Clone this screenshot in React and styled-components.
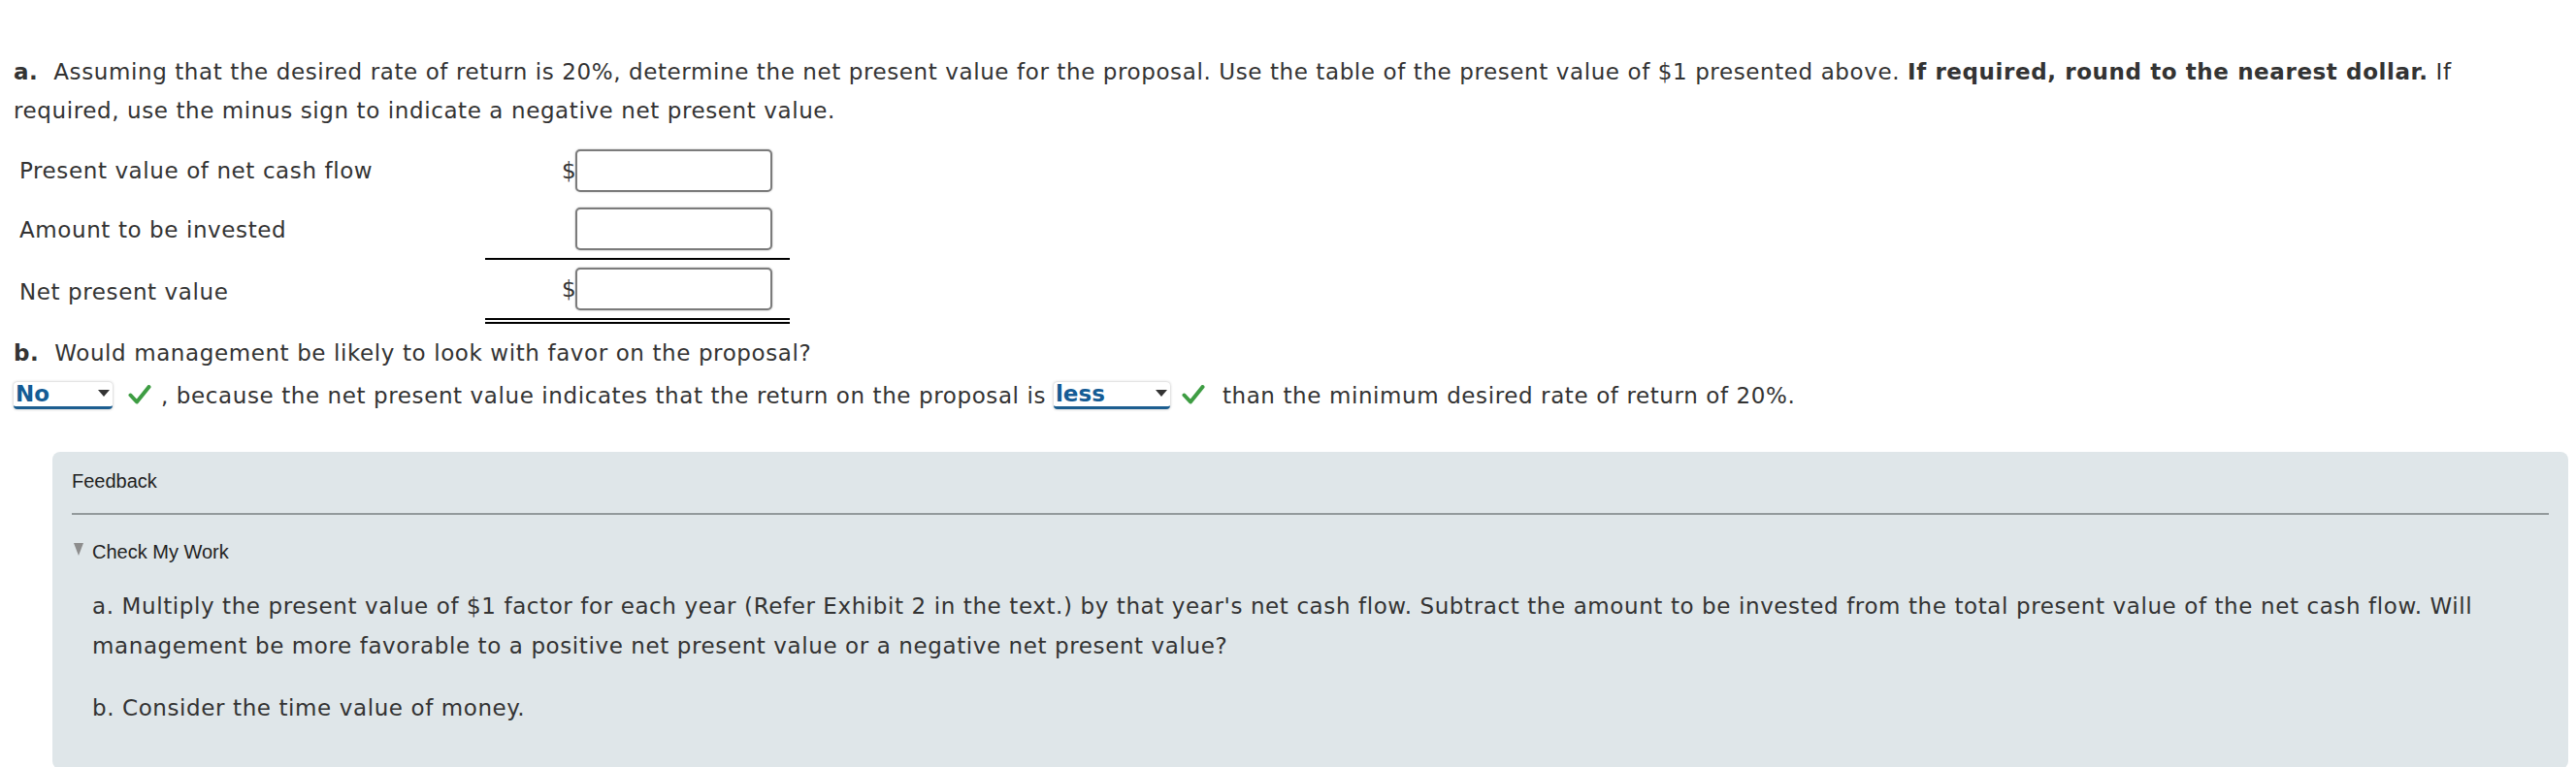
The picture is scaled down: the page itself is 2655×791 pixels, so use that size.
import React from "react"
import styled, { createGlobalStyle } from "styled-components"

const GlobalStyle = createGlobalStyle`
  body{
    margin: 0;
    background: #ffffff;
    color: #333333;
    font-family: "DejaVu Sans", Verdana, sans-serif;
    letter-spacing: 0.6px;
  }
`

const Page = styled.div`
  padding: 54px 8px 0 14px;
`

const Question = styled.p`
  margin: ${p => p.mt || 0}px 0 0 0;
  font-size: 23px;
  line-height: 40px;
  padding-right: 40px;
  b{ font-weight: bold; }
`

const AmountTable = styled.div`
  display: grid;
  grid-template-columns: 480px 314px;
  margin: 12px 0 0 6px;
`

const Label = styled.div`
  display: flex;
  align-items: center;
  font-size: 23px;
`

const AmountCell = styled.div`
  display: flex;
  align-items: center;
  justify-content: flex-end;
  padding: 8px 18px 8px 0;
  border-bottom: ${p => p.rule === "single" ? "2px solid #000" : p.rule === "double" ? "6px double #000" : "none"};
`

const Dollar = styled.span`
  font-size: 23px;
  width: 14px;
  letter-spacing: 0;
`

const AmountInput = styled.input`
  box-sizing: border-box;
  width: 203px;
  height: 44px;
  border: 2px solid #7b7b7b;
  border-radius: 5px;
  box-shadow: 0 0 2px rgba(0,0,0,0.35);
  background: #fff;
  outline: none;
`

const AnswerLine = styled.div`
  font-size: 23px;
  line-height: 42px;
  margin-top: 3px;
`

const Select = styled.span`
  display: inline-flex;
  align-items: center;
  justify-content: space-between;
  box-sizing: border-box;
  width: ${p => p.w}px;
  height: 28px;
  padding: 0 3px 0 2px;
  vertical-align: middle;
  background: #fff;
  border-radius: 4px;
  border-bottom: 3px solid #1c5e90;
  box-shadow: 0 0 3px rgba(0,0,0,0.3);
  color: #145c95;
  font-weight: bold;
  letter-spacing: 0;
  line-height: 25px;
  margin-top: -4px;
`

const Arrow = styled.span`
  width: 0;
  height: 0;
  border-left: 6px solid transparent;
  border-right: 6px solid transparent;
  border-top: 7px solid #333;
  margin-top: -2px;
`

const Check = styled.svg`
  width: 24px;
  height: 20px;
  vertical-align: middle;
  margin: -6px ${p => p.mr}px 0 ${p => p.ml}px;
`

const Feedback = styled.div`
  margin: 37px 0 0 40px;
  background: #dfe6e9;
  border-radius: 8px;
  padding: 19px 20px 42px 20px;
  min-height: 200px;
`

const FeedbackTitle = styled.div`
  font-family: "Liberation Sans", Arial, sans-serif;
  font-size: 20px;
  line-height: 23px;
  letter-spacing: 0;
  color: #222;
  padding-bottom: 21px;
  border-bottom: 2px solid #939a9c;
`

const Toggle = styled.div`
  display: flex;
  align-items: center;
  margin-top: 27px;
  font-family: "Liberation Sans", Arial, sans-serif;
  font-size: 20px;
  line-height: 23px;
  letter-spacing: 0;
  color: #222;
`

const Triangle = styled.span`
  width: 0;
  height: 0;
  border-left: 5px solid transparent;
  border-right: 5px solid transparent;
  border-top: 13px solid #8d8d8d;
  margin: -6px 9px 0 2px;
`

const Hint = styled.p`
  margin: ${p => p.mt}px 0 0 21px;
  font-size: 23px;
  line-height: 41px;
  color: #333;
`

const CheckMark = ({ ml, mr }) => (
  <Check viewBox="0 0 24 20" ml={ml} mr={mr}>
    <path d="M2.5 10.5 L9 17.5 L21.5 2" fill="none" stroke="#3e9d43" strokeWidth="4" strokeLinecap="round" strokeLinejoin="round" />
  </Check>
)

const rows = [
  { label: "Present value of net cash flow", dollar: true, rule: "none" },
  { label: "Amount to be invested", dollar: false, rule: "single" },
  { label: "Net present value", dollar: true, rule: "double" },
]

const App = () => {
  return (
    <>
      <GlobalStyle />
      <Page>
        <Question>
          <b>a.</b>&nbsp; Assuming that the desired rate of return is 20%, determine the net present value for the proposal. Use the table of the present value of $1 presented above. <b>If required, round to the nearest dollar.</b> If required, use the minus sign to indicate a negative net present value.
        </Question>

        <AmountTable>
          {rows.map(r => (
            <React.Fragment key={r.label}>
              <Label>{r.label}</Label>
              <AmountCell rule={r.rule}>
                <Dollar>{r.dollar ? "$" : ""}</Dollar>
                <AmountInput type="text" />
              </AmountCell>
            </React.Fragment>
          ))}
        </AmountTable>

        <Question mt={10}>
          <b>b.</b>&nbsp; Would management be likely to look with favor on the proposal?
        </Question>
        <AnswerLine>
          <Select w={102}>No<Arrow /></Select>
          <CheckMark ml={16} mr={10} />, because the net present value indicates that the return on the proposal is <Select w={120}>less<Arrow /></Select>
          <CheckMark ml={12} mr={10} /> than the minimum desired rate of return of 20%.
        </AnswerLine>

        <Feedback>
          <FeedbackTitle>Feedback</FeedbackTitle>
          <Toggle><Triangle />Check My Work</Toggle>
          <Hint mt={24}>
            a. Multiply the present value of $1 factor for each year (Refer Exhibit 2 in the text.) by that year's net cash flow. Subtract the amount to be invested from the total present value of the net cash flow. Will management be more favorable to a positive net present value or a negative net present value?
          </Hint>
          <Hint mt={23}>b. Consider the time value of money.</Hint>
        </Feedback>
      </Page>
    </>
  )
}

export default App
